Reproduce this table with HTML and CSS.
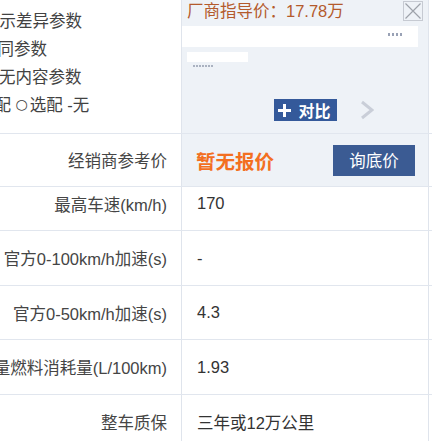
FILE: index.html
```html
<!DOCTYPE html>
<html lang="zh-CN">
<head>
<meta charset="utf-8">
<title>参数配置</title>
<link rel="stylesheet" href="styles.css">
</head>
<body>
<div class="sheet">
  <div class="row head">
    <div class="cell head-left">
      <div class="opt o1">显示差异参数</div>
      <div class="opt o2">隐藏相同参数</div>
      <div class="opt o3">隐藏无内容参数</div>
      <div class="opt o4">●标配 <span class="circ">○</span>选配 -无</div>
    </div>
    <div class="cell head-right">
      <div class="price-row">
        <span class="guide">厂商指导价：17.78万</span>
        <span class="close">
          <svg width="18" height="18" viewBox="0 0 18 18"><path d="M1.5 1.5L16.5 16.5M16.5 1.5L1.5 16.5" stroke="#9da2aa" stroke-width="1.2" fill="none"/></svg>
        </span>
      </div>
      <div class="blur-band"><span class="blur-mark"></span></div>
      <div class="blur-blob"></div>
      <div class="blur-dots"></div>
      <div class="compare-row">
        <span></span>
        <span class="compare">
          <svg width="13" height="13" viewBox="0 0 13 13"><path d="M6.5 0V13M0 6.5H13" stroke="#fff" stroke-width="3"/></svg>
          <span class="compare-text">对比</span>
        </span>
        <span class="next">
          <svg width="14" height="20" viewBox="0 0 14 20"><path d="M2 2L12 10L2 18" stroke="#c9ced8" stroke-width="3" fill="none"/></svg>
        </span>
      </div>
    </div>
    <div class="cell filler"></div>
  </div>

  <div class="row r-dealer">
    <div class="cell label">经销商参考价</div>
    <div class="cell value dealer">
      <span class="no-price">暂无报价</span>
      <span class="ask">询底价</span>
    </div>
    <div class="cell filler"></div>
  </div>

  <div class="row r-speed">
    <div class="cell label">最高车速(km/h)</div>
    <div class="cell value">170</div>
    <div class="cell filler"></div>
  </div>

  <div class="row r-54">
    <div class="cell label">官方0-100km/h加速(s)</div>
    <div class="cell value">-</div>
    <div class="cell filler"></div>
  </div>

  <div class="row r-53">
    <div class="cell label">官方0-50km/h加速(s)</div>
    <div class="cell value">4.3</div>
    <div class="cell filler"></div>
  </div>

  <div class="row r-54">
    <div class="cell label">最低荷电量燃料消耗量(L/100km)</div>
    <div class="cell value">1.93</div>
    <div class="cell filler"></div>
  </div>

  <div class="row r-54">
    <div class="cell label">整车质保</div>
    <div class="cell value">三年或12万公里</div>
    <div class="cell filler"></div>
  </div>
</div>
</body>
</html>
```

FILE: styles.css
```css
* { box-sizing: border-box; }

html, body {
  margin: 0;
  padding: 0;
  background: #ffffff;
}

body {
  font-family: "Liberation Sans", "Noto Sans CJK SC", sans-serif;
  font-size: 16.5px;
  color: #333333;
  overflow: hidden;
}

.sheet {
  width: 432px;
}

.row {
  display: grid;
  grid-template-columns: 182px 247px 1fr;
  border-bottom: 1px solid #e1e6ee;
}

.cell {
  border-right: 1px solid #dfe4ec;
}

.filler {
  border-right: none;
}

/* ---------- header ---------- */
.head {
  height: 134px;
}

.head-left {
  background: #ffffff;
  overflow: hidden;
  white-space: nowrap;
  padding-top: 7px;
  color: #424242;
}

.opt {
  line-height: 28px;
  height: 28px;
}

.o1 { margin-left: -17px; }
.o2 { margin-left: -52px; }
.o3 { margin-left: -34px; }
.o4 { margin-left: -32px; }

.circ {
  font-family: "DejaVu Sans", sans-serif;
  font-size: 14px;
  line-height: 1;
  margin-right: 2px;
  vertical-align: 2px;
}

.head-right {
  background: #eef2f7;
  display: flex;
  flex-direction: column;
}

.price-row {
  display: flex;
  justify-content: space-between;
  align-items: flex-start;
  height: 26px;
  padding: 0 5px 0 5px;
}

.guide {
  line-height: 22px;
  color: #b45a2c;
}

.close {
  margin-top: 1px;
  width: 20px;
  height: 20px;
  border: 1px solid #c6cad2;
  display: flex;
  align-items: center;
  justify-content: center;
}

.close svg { display: block; }

.blur-band {
  height: 21px;
  width: 236px;
  background: #ffffff;
  position: relative;
}

.blur-mark {
  position: absolute;
  left: 206px;
  top: 7px;
  width: 14px;
  height: 3px;
  background: repeating-linear-gradient(90deg, #6e7a96 0 2px, transparent 2px 4px);
  opacity: 0.7;
}

.blur-blob {
  margin-top: 5px;
  margin-left: 5px;
  width: 61px;
  height: 10px;
  background: #ffffff;
}

.blur-dots {
  margin-top: 3px;
  margin-left: 11px;
  width: 20px;
  height: 2px;
  background: repeating-linear-gradient(90deg, #7d879c 0 2px, transparent 2px 3px);
  opacity: 0.6;
}

.compare-row {
  margin-top: 32px;
  display: grid;
  grid-template-columns: 1fr auto 1fr;
  align-items: center;
}

.compare {
  display: flex;
  align-items: center;
  height: 22px;
  width: 63px;
  padding: 0 4px;
  gap: 8px;
  background: #34599a;
  color: #ffffff;
  font-family: "Noto Sans CJK SC", sans-serif;
  font-weight: 700;
  font-size: 16px;
  line-height: 22px;
}

.compare svg { display: block; flex: none; }

.next {
  margin-left: 23px;
  display: flex;
}

/* ---------- data rows ---------- */
.label {
  text-align: right;
  padding-right: 14px;
  white-space: nowrap;
  overflow: hidden;
  direction: rtl;
  color: #454545;
  display: flex;
  align-items: center;
  justify-content: flex-start;
}

.value {
  padding-left: 15px;
  display: flex;
  align-items: center;
  color: #333333;
}

.r-dealer { height: 53px; }
.r-dealer .value { background: #eef2f7; }
.r-speed { height: 44px; }
.r-speed .label,
.r-speed .value { padding-bottom: 10px; }
.r-54 { height: 55px; }
.r-53 { height: 54px; }

.dealer {
  justify-content: space-between;
  padding-left: 14px;
  padding-right: 13px;
}

.no-price {
  font-family: "Noto Sans CJK SC", sans-serif;
  font-weight: 700;
  font-size: 19.5px;
  color: #f36f21;
}

.ask {
  width: 82px;
  height: 31px;
  background: #3b5b93;
  color: #ffffff;
  display: flex;
  align-items: center;
  justify-content: center;
  font-size: 16.5px;
}
```
